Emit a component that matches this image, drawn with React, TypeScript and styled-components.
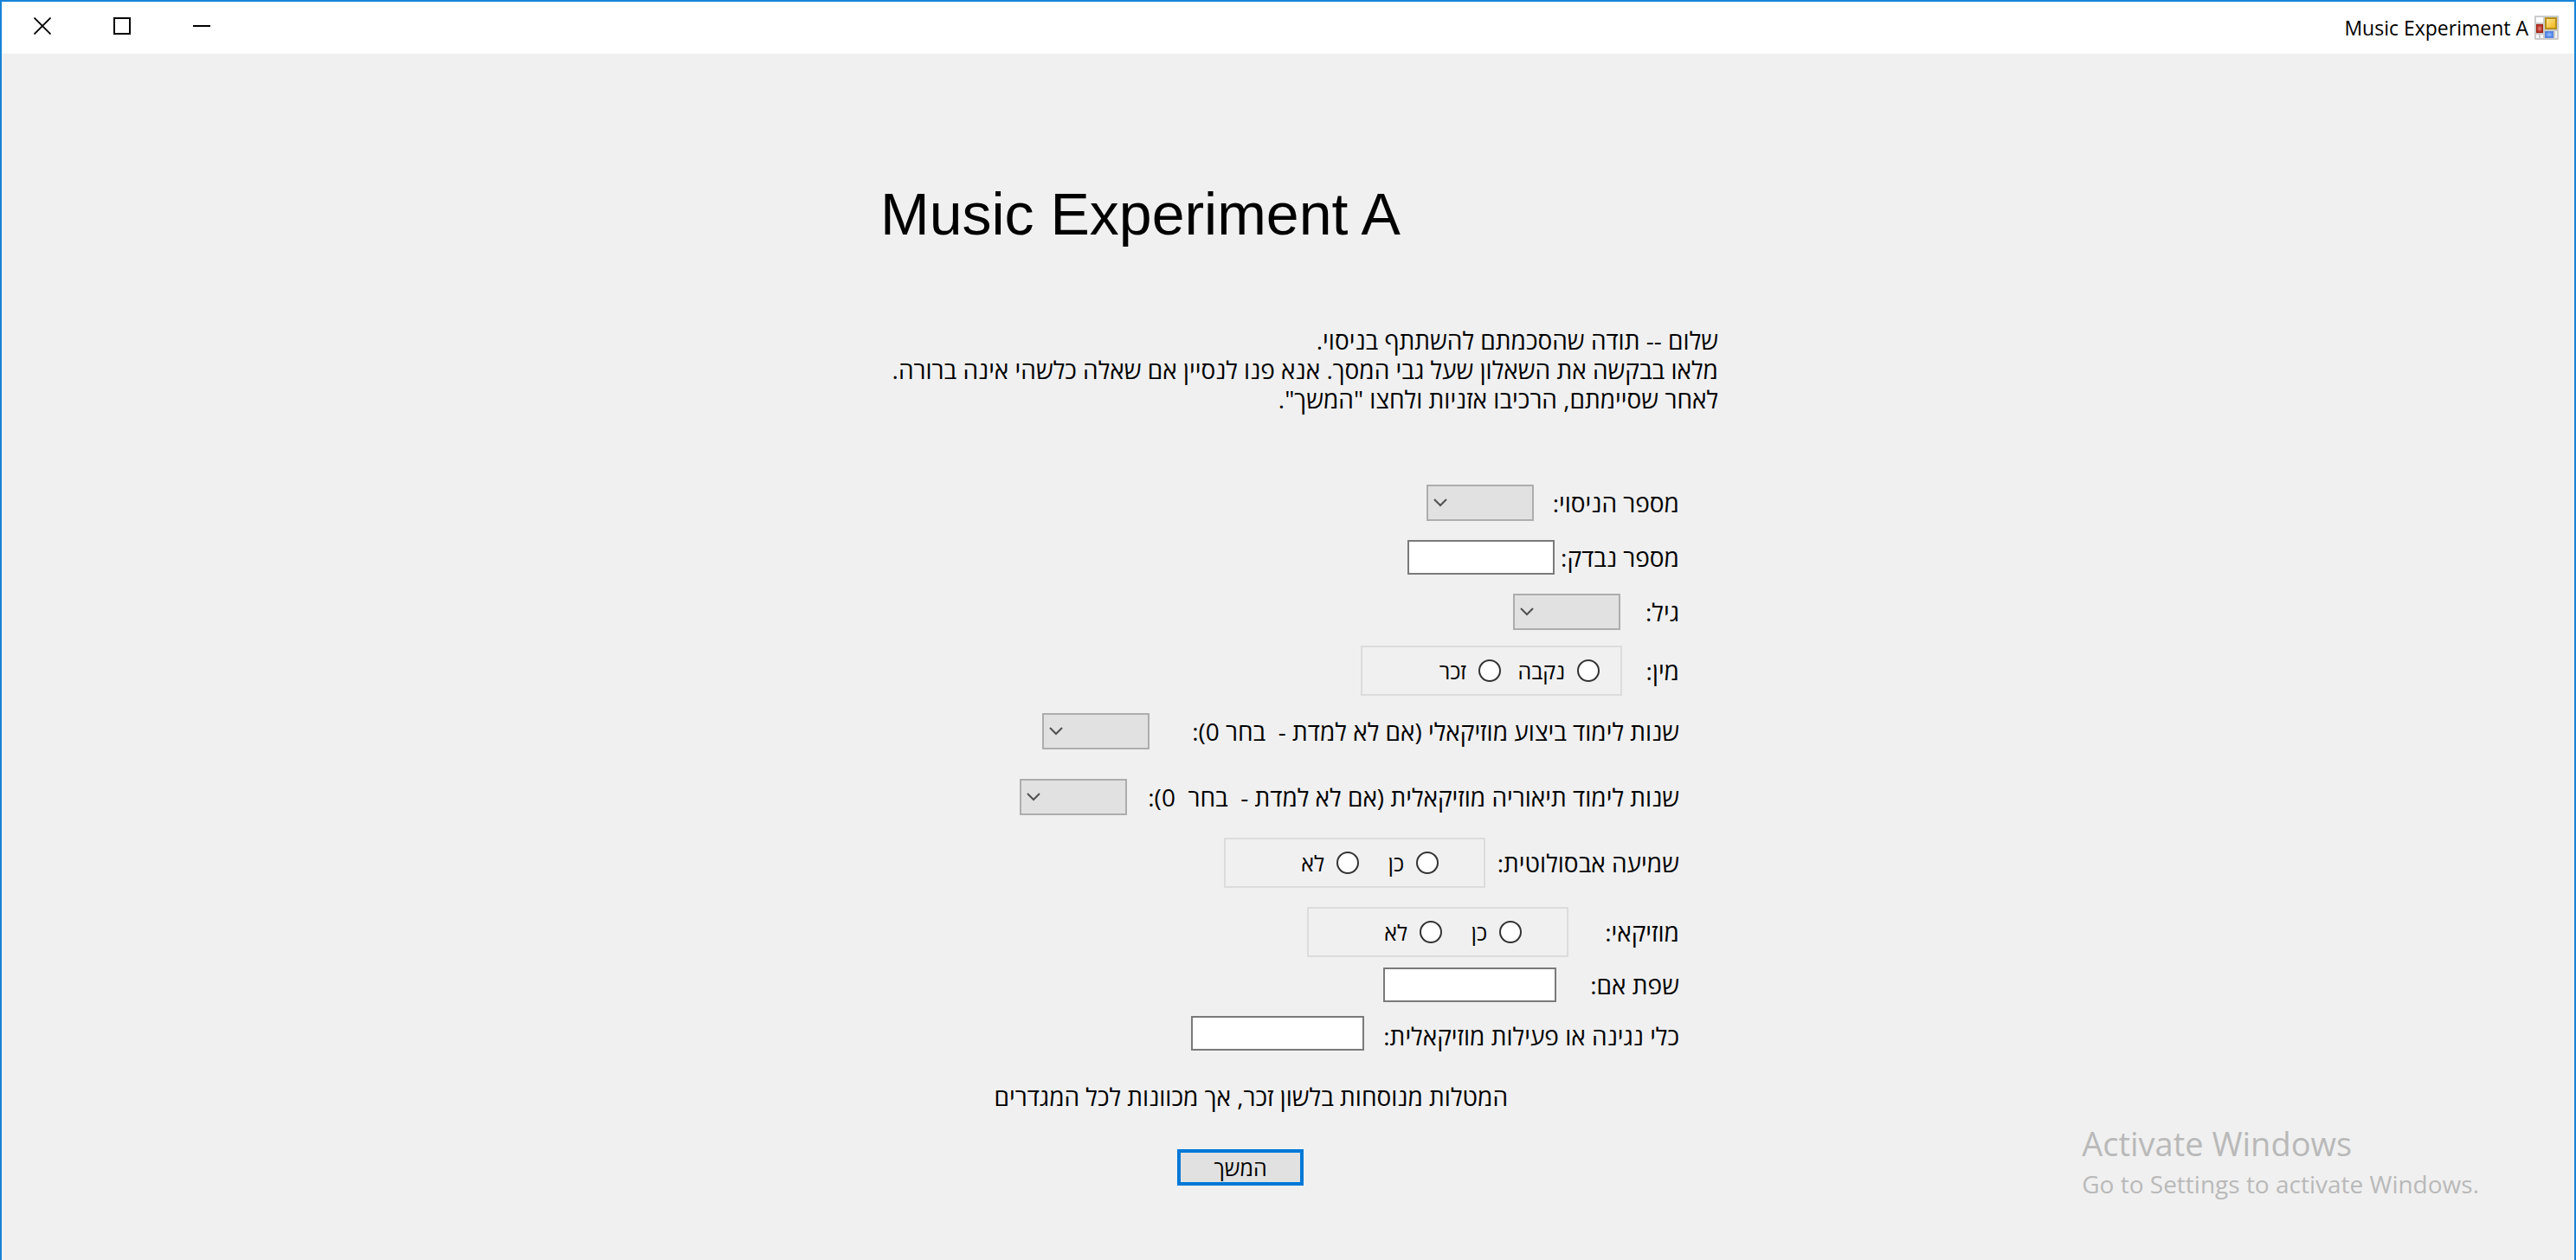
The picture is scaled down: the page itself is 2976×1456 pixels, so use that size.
import React, { useId } from 'react';
import styled, { createGlobalStyle } from 'styled-components';

const GlobalStyle = createGlobalStyle`
  *, *::before, *::after { box-sizing: border-box; }
  body {
    margin: 0;
    background: #f0f0f0;
    color: #000;
    font-family: 'Open Sans', 'DejaVu Sans', sans-serif;
    font-size: 28px;
    line-height: 34px;
  }
  button, input, select { font: inherit; color: inherit; margin: 0; }
`;

const Window = styled.div`
  position: relative;
  min-height: 100vh;
  border: 2px solid #1883d7;
  border-bottom: 0;
  background: #f0f0f0;
`;

const TitleBar = styled.header`
  display: flex;
  align-items: center;
  justify-content: space-between;
  height: 60px;
  padding-right: 18px;
  background: #fff;
`;

const WindowControls = styled.div`
  display: flex;
  align-self: stretch;
`;

const ControlButton = styled.button`
  display: flex;
  align-items: center;
  justify-content: center;
  width: 92px;
  padding: 0 0 4px 2px;
  border: 0;
  background: transparent;
`;

const Caption = styled.div`
  display: flex;
  align-items: center;
  gap: 7px;
  font-size: 23px;

  svg { display: block; }
`;

const Content = styled.main`
  max-width: 994px;
  margin: 0 auto;
  padding: 144px 0 86px;
`;

const Heading = styled.h1`
  margin: 0 0 88px;
  padding-left: 26px;
  direction: ltr;
  font: 400 68px/82px 'Liberation Sans', Arial, sans-serif;
`;

const Intro = styled.p`
  margin: 0 0 82px;
`;

const Form = styled.form`
  display: flex;
  flex-direction: column;
  align-items: flex-start;
`;

const Row = styled.div<{ $gap: number; $low?: boolean }>`
  display: flex;
  align-items: ${(p) => (p.$low ? 'flex-end' : 'center')};
  margin-top: ${(p) => p.$gap}px;
  padding-right: 45px;
`;

const labelStyle = `
  flex: none;
  white-space: pre;
`;

const FieldLabel = styled.label<{ $width: number }>`
  ${labelStyle}
  width: ${(p) => p.$width}px;
`;

const GroupLabel = styled.span<{ $width: number }>`
  ${labelStyle}
  width: ${(p) => p.$width}px;
`;

const TextBox = styled.input<{ $width: number }>`
  width: ${(p) => p.$width}px;
  height: 40px;
  padding: 0 8px;
  border: 2px solid #7a7a7a;
  border-radius: 0;
  background: #fff;
`;

const SelectWrap = styled.div`
  position: relative;

  svg {
    position: absolute;
    left: 8px;
    top: 15px;
    pointer-events: none;
  }
`;

const SelectBox = styled.select`
  display: block;
  appearance: none;
  width: 124px;
  height: 42px;
  padding: 0 8px 0 28px;
  border: 2px solid #adadad;
  border-radius: 0;
  background: #e1e1e1;
`;

const RadioBox = styled.div<{ $inset: number }>`
  display: flex;
  align-items: center;
  width: 302px;
  height: 58px;
  padding-right: ${(p) => p.$inset}px;
  border: 2px solid #dcdcdc;
`;

const Option = styled.label<{ $width: number }>`
  display: flex;
  align-items: center;
  gap: 14px;
  width: ${(p) => p.$width}px;
  font-size: 25px;
  white-space: nowrap;
`;

const Radio = styled.input`
  appearance: none;
  flex: none;
  width: 26px;
  height: 26px;
  border: 2px solid #333;
  border-radius: 50%;
  background: #fff;

  &:checked { box-shadow: inset 0 0 0 5px #fff; background: #333; }
`;

const Note = styled.p`
  margin: 36px 0 44px;
  padding-right: 243px;
`;

const SubmitButton = styled.button`
  width: 146px;
  height: 42px;
  margin-right: 479px;
  padding: 0;
  border: 4px solid #0078d7;
  background: #e1e1e1;
  font-size: 25px;
  line-height: 34px;
`;

const Watermark = styled.aside`
  position: absolute;
  right: 110px;
  bottom: 70px;
  color: #b9b9b9;
  line-height: 36px;
  pointer-events: none;
`;

const WatermarkTitle = styled.div`
  margin-bottom: 4px;
  font-size: 38px;
  line-height: 50px;
`;

function FormIcon() {
  return (
    <svg width="28" height="28" viewBox="0 0 28 28" aria-hidden="true">
      <defs>
        <linearGradient id="gold" x1="0" y1="0" x2="1" y2="1">
          <stop offset="0" stopColor="#ffe99a" />
          <stop offset="1" stopColor="#eeb010" />
        </linearGradient>
        <radialGradient id="red">
          <stop offset="0" stopColor="#e08a80" />
          <stop offset="1" stopColor="#b4281c" />
        </radialGradient>
        <radialGradient id="blue">
          <stop offset="0" stopColor="#9cc0ff" />
          <stop offset="1" stopColor="#4a80e4" />
        </radialGradient>
      </defs>
      <rect width="28" height="28" rx="1" fill="#cbcbcb" />
      <rect x="2" y="2" width="8" height="6" fill="#fff" />
      <rect x="2.5" y="10.5" width="7" height="9" fill="url(#red)" stroke="#a02418" />
      <rect x="13" y="3" width="12" height="12" fill="url(#gold)" stroke="#b8901c" strokeWidth="2" />
      <rect x="12.5" y="18.5" width="9" height="7" fill="url(#blue)" stroke="#5a86dc" />
      <rect x="2" y="22" width="3" height="4" fill="#fff" />
      <rect x="7" y="22" width="3" height="4" fill="#fff" />
      <rect x="24" y="18" width="2" height="8" fill="#f4f4f4" />
    </svg>
  );
}

function SelectField({ gap, width, label }: { gap: number; width: number; label: string }) {
  const id = useId();
  return (
    <Row $gap={gap}>
      <FieldLabel htmlFor={id} $width={width}>{label}</FieldLabel>
      <SelectWrap>
        <SelectBox id={id} defaultValue="">
          <option value="" />
        </SelectBox>
        <svg width="16" height="12" viewBox="0 0 16 12" fill="none" stroke="#505050" strokeWidth="2" aria-hidden="true">
          <path d="M1 2l7 7 7-7" />
        </svg>
      </SelectWrap>
    </Row>
  );
}

function TextField({ gap, width, label, boxWidth, low }: {
  gap: number; width: number; label: string; boxWidth: number; low?: boolean;
}) {
  const id = useId();
  return (
    <Row $gap={gap} $low={low}>
      <FieldLabel htmlFor={id} $width={width}>{label}</FieldLabel>
      <TextBox id={id} type="text" $width={boxWidth} />
    </Row>
  );
}

function RadioField({ gap, width, label, options, inset, pitch }: {
  gap: number; width: number; label: string; options: string[]; inset: number; pitch: number;
}) {
  const id = useId();
  return (
    <Row $gap={gap}>
      <GroupLabel id={id} $width={width}>{label}</GroupLabel>
      <RadioBox role="radiogroup" aria-labelledby={id} $inset={inset}>
        {options.map((option) => (
          <Option key={option} $width={pitch}>
            <Radio type="radio" name={id} value={option} />
            {option}
          </Option>
        ))}
      </RadioBox>
    </Row>
  );
}

export default function App() {
  return (
    <Window>
      <GlobalStyle />
      <TitleBar>
        <WindowControls>
          <ControlButton type="button" aria-label="Close">
            <svg width="20" height="20" viewBox="0 0 20 20" stroke="#000" strokeWidth="1.8">
              <path d="M.5.5l19 19M19.5.5l-19 19" />
            </svg>
          </ControlButton>
          <ControlButton type="button" aria-label="Maximize">
            <svg width="20" height="20" viewBox="0 0 20 20" fill="none" stroke="#000" strokeWidth="2">
              <path d="M1 1h18v18H1z" />
            </svg>
          </ControlButton>
          <ControlButton type="button" aria-label="Minimize">
            <svg width="20" height="20" viewBox="0 0 20 20" stroke="#000" strokeWidth="2">
              <path d="M0 10h20" />
            </svg>
          </ControlButton>
        </WindowControls>
        <Caption>
          Music Experiment A
          <FormIcon />
        </Caption>
      </TitleBar>
      <Content dir="rtl" lang="he">
        <Heading>Music Experiment A</Heading>
        <Intro>
          שלום -- תודה שהסכמתם להשתתף בניסוי.
          <br />
          מלאו בבקשה את השאלון שעל גבי המסך. אנא פנו לנסיין אם שאלה כלשהי אינה ברורה.
          <br />
          לאחר שסיימתם, הרכיבו אזניות ולחצו "המשך".
        </Intro>
        <Form onSubmit={(e) => e.preventDefault()}>
          <SelectField gap={0} width={168} label="מספר הניסוי:" />
          <TextField gap={22} width={144} label="מספר נבדק:" boxWidth={170} />
          <SelectField gap={22} width={68} label="גיל:" />
          <RadioField gap={18} width={66} label="מין:" options={['נקבה', 'זכר']} inset={24} pitch={114} />
          <SelectField gap={20} width={612} label="שנות לימוד ביצוע מוזיקאלי (אם לא למדת -  בחר 0):" />
          <SelectField gap={34} width={638} label="שנות לימוד תיאוריה מוזיקאלית (אם לא למדת -  בחר  0):" />
          <RadioField gap={26} width={224} label="שמיעה אבסולוטית:" options={['כן', 'לא']} inset={52} pitch={92} />
          <RadioField gap={22} width={128} label="מוזיקאי:" options={['כן', 'לא']} inset={52} pitch={92} />
          <TextField gap={12} width={142} label="שפת אם:" boxWidth={200} />
          <TextField gap={16} width={364} label="כלי נגינה או פעילות מוזיקאלית:" boxWidth={200} low />
          <Note>המטלות מנוסחות בלשון זכר, אך מכוונות לכל המגדרים</Note>
          <SubmitButton type="submit">המשך</SubmitButton>
        </Form>
      </Content>
      <Watermark>
        <WatermarkTitle>Activate Windows</WatermarkTitle>
        Go to Settings to activate Windows.
      </Watermark>
    </Window>
  );
}
